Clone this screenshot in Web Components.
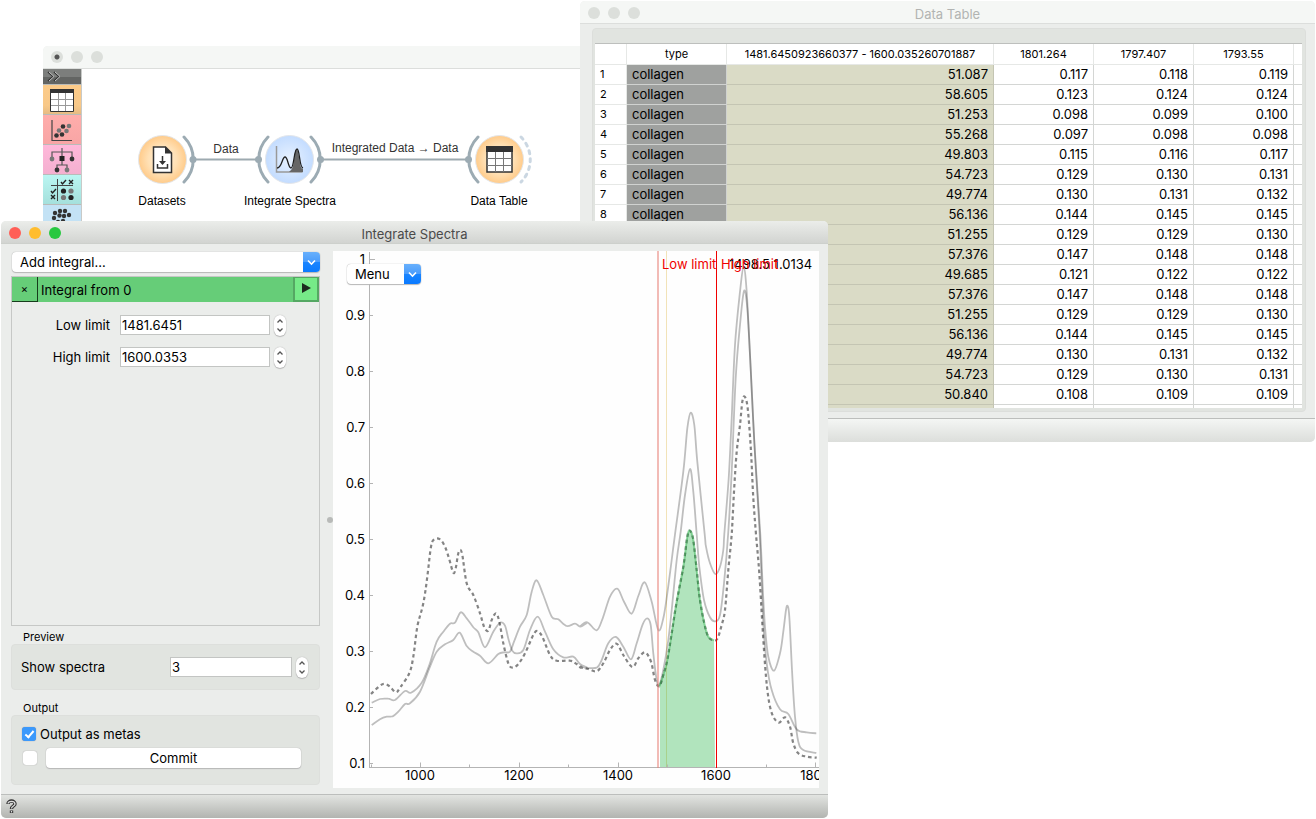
<!DOCTYPE html>
<html lang="en">
<head>
<meta charset="utf-8">
<title>Integrate Spectra</title>
<style>
  body {
    margin: 0;
    background: #fff;
    color: #000;
    font: 13px/16px Inter, "Liberation Sans", sans-serif;
  }
</style>
</head>
<body>
<spectra-desktop></spectra-desktop>

<script>
class MacWindow extends HTMLElement {
  constructor() {
    super();
    this.attachShadow({ mode: 'open' });
  }

  connectedCallback() {
    this.shadowRoot.innerHTML = `
      <style>
        :host {
          display: flex;
          flex-direction: column;
          background: #ebedeb;
          border-radius: 5px;
          overflow: hidden;
        }
        header {
          display: grid;
          grid-template-columns: 72px 1fr 72px;
          align-items: center;
          height: 22px;
          background: #f5f7f5;
          border-bottom: 1px solid #dcdedc;
          color: #b2b4b2;
        }
        .lights {
          display: flex;
          gap: 8px;
          padding-left: 8px;
        }
        .lights i {
          width: 12px;
          height: 12px;
          border-radius: 50%;
          background: #dcdfdb;
        }
        :host([edited]) .lights i:first-child {
          background: radial-gradient(circle, #555 2px, #dcdfdb 3px);
        }
        h1 {
          margin: 0;
          font-size: 13px;
          line-height: 22px;
          padding-top: 2px;
          font-weight: 400;
          text-align: center;
        }
        :host([active]) header {
          background: linear-gradient(#ebedea, #d2d4d1);
          border-color: #cdd0cc;
          color: #4a4a4a;
        }
        :host([active]) i:nth-child(1) { background: #ff5f57; }
        :host([active]) i:nth-child(2) { background: #ffbd2e; }
        :host([active]) i:nth-child(3) { background: #28c840; }
      </style>
      <header>
        <div class="lights"><i></i><i></i><i></i></div>
        <h1>${this.getAttribute('heading') || ''}</h1>
      </header>
      <slot></slot>
    `;
  }
}

class MacSelect extends HTMLElement {
  constructor() {
    super();
    this.attachShadow({ mode: 'open' });
  }

  connectedCallback() {
    const label = this.getAttribute('label');
    this.shadowRoot.innerHTML = `
      <style>
        :host { display: block; }
        div {
          display: grid;
          grid-template-columns: 1fr 17px;
          height: 20px;
          border-radius: 4px;
          background: #fff;
          box-shadow: 0 0 1px #999, 0 1px 1px #bbb;
          overflow: hidden;
        }
        select {
          grid-area: 1 / 1 / 2 / 3;
          appearance: none;
          border: 0;
          padding: 0 20px 0 8px;
          background: none;
          color: inherit;
          font: inherit;
        }
        svg {
          grid-area: 1 / 2;
          pointer-events: none;
          background: linear-gradient(#68b0fc, #4a9cfc 50%, #1a85ff 50%, #0a7aff);
        }
      </style>
      <div>
        <select aria-label="${label}"><option>${label}</option></select>
        <svg width="17" height="20" viewBox="0 0 17 20" fill="none" stroke="#fff" stroke-width="1.6"><path d="M5 8.5l3.5 3.5L12 8.5"/></svg>
      </div>
    `;
  }
}

class SpinBox extends HTMLElement {
  constructor() {
    super();
    this.attachShadow({ mode: 'open' });
  }

  connectedCallback() {
    this.shadowRoot.innerHTML = `
      <style>
        :host { display: block; }
        label {
          display: grid;
          grid-template-columns: var(--label-width, 98px) 1fr 12px;
          align-items: center;
          height: 22px;
        }
        span { text-align: var(--label-align, right); }
        input {
          box-sizing: border-box;
          min-width: 0;
          height: 20px;
          margin: 0 4px 0 10px;
          padding: 0 1px;
          border: 1px solid #c3c5c3;
          background: #fff;
          color: inherit;
          font: inherit;
        }
        svg {
          border-radius: 6px;
          background: #fff;
          box-shadow: 0 0 1px #999, 0 1px 1px #bbb;
        }
      </style>
      <label>
        <span>${this.getAttribute('label')}</span>
        <input type="text" value="${this.getAttribute('value')}">
        <svg width="12" height="21" viewBox="0 0 12 21" fill="none" stroke="#555" stroke-width="1.3"><path d="M3.5 7.5L6 5l2.500 2.500M3.500 13.500L6 16l2.500-2.500"/></svg>
      </label>
    `;
  }
}

class GroupBox extends HTMLElement {
  constructor() {
    super();
    this.attachShadow({ mode: 'open' });
  }

  connectedCallback() {
    this.shadowRoot.innerHTML = `
      <style>
        :host { display: block; }
        h2 {
          margin: 0;
          padding: 0 12px;
          font-size: 11px;
          line-height: 14px;
          font-weight: 400;
        }
        div {
          padding: 11px;
          border: 1px solid #dddfdc;
          border-radius: 4px;
          background: #e1e4e0;
        }
      </style>
      <h2>${this.getAttribute('heading')}</h2>
      <div><slot></slot></div>
    `;
  }
}

class IntegralPanel extends HTMLElement {
  constructor() {
    super();
    this.attachShadow({ mode: 'open' });
  }

  connectedCallback() {
    this.shadowRoot.innerHTML = `
      <style>
        :host {
          display: flex;
          flex-direction: column;
        }
        mac-select { margin-left: 1px; }
        .list {
          flex: 1;
          margin-top: 4px;
          border: 1px solid #c6c8c6;
        }
        .entry {
          display: grid;
          grid-template-columns: 26px 1fr 26px;
          align-items: center;
          height: 25px;
          margin-bottom: 12px;
          background: #66cd78;
        }
        .entry button {
          height: 25px;
          padding: 0;
          border: 1px solid #173c1c;
          border-width: 0 1px 1px 0;
          background: none;
          font: 11px/12px Inter, sans-serif;
        }
        .entry .run {
          border: 2px solid #55a863;
          border-width: 1px 2px 2px;
          background: #76ea88;
        }
        .entry span { padding-left: 3px; }
        .list spin-box { margin: 0 33px 10px 0; }
        group-box { margin-top: 4px; }
        group-box:last-child { margin-top: 11px; }
        .preview { --label-width: 139px; --label-align: left; }
        .preview spin-box { margin: 0 0 0 -2px; }
        .check {
          display: flex;
          align-items: center;
          gap: 4px;
          margin: -1px 0 0 -1px;
        }
        .row {
          display: flex;
          align-items: center;
          gap: 9px;
          margin: 6px 7px 5px 0;
        }
        input {
          display: grid;
          place-content: center;
          flex: none;
          appearance: none;
          width: 14px;
          height: 14px;
          margin: 0;
          border-radius: 3px;
          background: #fff;
          box-shadow: 0 0 1px #888;
        }
        input:checked { background: #3b99fc; }
        input:checked::before {
          content: "";
          width: 3px;
          height: 7px;
          margin-bottom: 2px;
          border: solid #fff;
          border-width: 0 2px 2px 0;
          transform: rotate(40deg);
        }
        .commit {
          flex: 1;
          height: 20px;
          padding: 0;
          border: 0;
          border-radius: 4px;
          background: #fff;
          box-shadow: 0 0 1px #999, 0 1px 1px #bbb;
          color: inherit;
          font: inherit;
        }
      </style>
      <mac-select label="Add integral..."></mac-select>
      <div class="list">
        <div class="entry">
          <button type="button">×</button>
          <span>Integral from 0</span>
          <button type="button" class="run" aria-label="Run"><svg width="12" height="12" viewBox="0 0 12 12"><path d="M2 1l9 5-9 5z" fill="#1d2b1f"/></svg></button>
        </div>
        <spin-box label="Low limit" value="1481.6451"></spin-box>
        <spin-box label="High limit" value="1600.0353"></spin-box>
      </div>
      <group-box class="preview" heading="Preview">
        <spin-box label="Show spectra" value="3"></spin-box>
      </group-box>
      <group-box heading="Output">
        <label class="check"><input type="checkbox" checked>Output as metas</label>
        <div class="row">
          <input type="checkbox" aria-label="Commit automatically">
          <button type="button" class="commit">Commit</button>
        </div>
      </group-box>
    `;
  }
}

// Samples are in thirds of a pixel; every run starts at its own [dx, dy].
const TRACES = {
  upper: [
    [-9, 807, [125,615, 150,598, 170,590, 188,589, 205,575, 225,552, 240,550, 270,515, 300,440, 320,395, 345,373, 370,360, 389,338, 410,378, 430,395, 450,407, 475,430, 505,402, 523,397, 540,395, 552,365, 570,320, 590,285, 605,215, 620,181, 640,225, 665,290, 685,298, 710,318, 735,311, 752,320, 772,307]],
    [741, 807, [0,320, 22,307, 50,331, 68,295, 90,230, 112,206, 132,245, 155,281, 175,228, 194,187, 215,245, 235,330, 250,295, 262,220, 275,120]],
    [741, -18, [285,868, 310,680, 322,550, 332,503, 343,540, 352,650, 374,868]],
    [741, 807, [378,80, 390,130, 406,162, 420,140, 430,90]],
    [741, -18, [433,868, 446,700, 455,520, 465,300, 480,140, 491,68, 500,140, 510,330, 523,590, 541,868]],
    [741, 807, [548,200, 555,320, 565,410, 582,452, 600,400, 610,335, 618,270, 623,258, 628,290, 636,450, 645,590, 655,665, 670,690, 709,699]],
  ],
  middle: [
    [-9, 807, [125,548, 150,537, 175,536, 195,540, 225,513, 243,518, 275,488, 298,435, 320,365, 340,335, 360,311, 375,308, 392,277, 410,295, 430,322, 445,337, 465,382, 490,335, 510,308, 525,317, 536,360, 547,392, 560,400, 580,390, 600,330, 623,290, 645,335, 670,388, 700,412, 730,410, 750,432, 770,442]],
    [741, 807, [15,443, 50,443, 65,420, 85,370, 108,351, 130,380, 153,418, 170,370, 188,313, 202,295, 212,315, 220,400, 230,480, 238,495, 250,450, 265,360, 275,270, 290,120]],
    [741, -18, [302,860, 315,750, 330,672, 340,740, 350,868]],
    [741, 807, [358,140, 372,240, 390,292, 406,304, 420,285, 432,190]],
    [741, -18, [445,860, 455,680, 467,400, 480,240, 492,138, 502,190, 512,370, 525,630, 539,868]],
    [741, 807, [550,310, 560,430, 575,510, 600,568, 625,582, 650,628, 680,637, 709,640]],
  ],
  dashed: [
    [-9, 807, [123,522, 150,497, 165,492, 180,500, 198,517, 212,500, 238,460, 250,410, 262,320, 280,250, 292,170, 303,80, 313,58, 330,58, 345,80, 357,115, 370,158, 377,145, 386,96, 396,100, 410,190, 430,225, 450,280, 463,322, 475,332, 485,300, 498,280, 508,305, 520,370, 535,430, 548,443, 565,432, 585,400, 610,345, 622,333, 637,350, 660,405, 680,422, 720,422, 740,432, 760,445]],
    [741, 807, [0,442, 25,447, 50,454, 70,430, 90,390, 110,371, 130,405, 157,441, 175,415, 195,397, 213,425, 225,480]],
  ],
  peak: [
    [741, 807, [238,499, 250,465, 262,420, 275,340, 290,245, 310,140, 322,50, 330,32, 340,60, 350,150, 360,240, 373,310, 385,350, 402,361]],
  ],
  tail: [
    [741, 807, [413,355, 425,315, 435,270, 445,150]],
    [741, -18, [455,868, 462,740, 470,620, 480,540, 487,470, 494,455, 503,490, 513,620, 520,760, 528,868]],
    [741, 807, [538,160, 548,330, 558,470, 568,550, 580,590, 597,608, 615,592, 630,620, 640,670, 655,700, 680,710, 710,713]],
  ],
};

function points(runs) {
  const out = [];
  runs.forEach(([dx, dy, run]) => {
    for (let i = 0; i < run.length; i += 2) {
      out.push([(run[i] + dx) / 3, (run[i + 1] + dy) / 3]);
    }
  });
  return out;
}

// Catmull-Rom spline through the points
function curve(pts) {
  let d = `M${pts[0].join(' ')}`;
  for (let i = 0; i < pts.length - 1; i += 1) {
    const a = pts[i - 1] || pts[i];
    const b = pts[i];
    const c = pts[i + 1];
    const e = pts[i + 2] || c;
    const ctrl = [
      b[0] + (c[0] - a[0]) / 6, b[1] + (c[1] - a[1]) / 6,
      c[0] - (e[0] - b[0]) / 6, c[1] - (e[1] - b[1]) / 6,
      c[0], c[1],
    ];
    d += `C${ctrl.map((v) => v.toFixed(1)).join(' ')}`;
  }
  return d;
}

class SpectraPlot extends HTMLElement {
  constructor() {
    super();
    this.attachShadow({ mode: 'open' });
  }

  connectedCallback() {
    let yAxis = '';
    for (let i = 0; i < 10; i += 1) {
      const y = 8 + i * 56;
      const value = (10 - i) / 10;
      yAxis += `<path class="axis" d="M36 ${y + 0.5}h${i ? 4 : 6}"/>
        <text x="32" y="${y + 5}" text-anchor="end">${value}</text>`;
    }
    let xAxis = '';
    for (let i = 0; i < 10; i += 1) {
      const x = Math.round(37.6 + i * 49.4);
      xAxis += `<path class="axis" d="M${x + 0.5} 516.500v${i % 2 ? -5 : -3}"/>`;
      if (i % 2) {
        xAxis += `<text x="${x}" y="529" text-anchor="middle">${900 + i * 100}</text>`;
      }
    }
    const upper = curve(points(TRACES.upper));
    const middle = curve(points(TRACES.middle));
    const dashed = curve(points([...TRACES.dashed, ...TRACES.peak, ...TRACES.tail]));
    const peak = curve(points(TRACES.peak));

    this.shadowRoot.innerHTML = `
      <style>
        :host {
          display: block;
          position: relative;
          background: #fefefe;
        }
        svg {
          display: block;
          width: 100%;
          font-size: 13px;
        }
        .axis { fill: none; stroke: #b4b4b4; }
        .trace { fill: none; stroke: #000; stroke-opacity: .25; stroke-width: 1.8; }
        .dash { stroke-opacity: .48; stroke-width: 2.2; stroke-dasharray: 3.500 3; }
        mac-select {
          position: absolute;
          left: 14px;
          top: 13px;
          width: 74px;
        }
      </style>
      <svg viewBox="0 0 486 537" role="img" aria-label="Spectra">
        <path d="M333.500 0v517" stroke="#f2e3b8"/>
        <path d="${peak}L382 516H327V437z" fill="#00aa28" fill-opacity=".3"/>
        <path d="${upper}" class="trace"/>
        <path d="${middle}" class="trace"/>
        <path d="${dashed}" class="trace dash"/>
        <path d="${peak}" fill="none" stroke="#32b450" stroke-opacity=".5" stroke-width="2"/>
        <path class="axis" d="M36.500 1v516M36 516.500h450"/>
        ${yAxis}
        ${xAxis}
        <path d="M325 0v517" stroke="#e8837a" stroke-opacity=".55" stroke-width="2"/>
        <path d="M383.500 0v517" stroke="#f00000"/>
        <text x="396" y="18">1498.5 1.0134</text>
        <text x="329" y="18" fill="#f00000">Low limit</text>
        <text x="388" y="18" fill="#f00000">High limit</text>
      </svg>
      <mac-select label="Menu"></mac-select>
    `;
  }
}

const ROWS = [
  ['51.087', '0.117', '0.118', '0.119'],
  ['58.605', '0.123', '0.124', '0.124'],
  ['51.253', '0.098', '0.099', '0.100'],
  ['55.268', '0.097', '0.098', '0.098'],
  ['49.803', '0.115', '0.116', '0.117'],
  ['54.723', '0.129', '0.130', '0.131'],
  ['49.774', '0.130', '0.131', '0.132'],
  ['56.136', '0.144', '0.145', '0.145'],
  ['51.255', '0.129', '0.129', '0.130'],
  ['57.376', '0.147', '0.148', '0.148'],
  ['49.685', '0.121', '0.122', '0.122'],
  ['57.376', '0.147', '0.148', '0.148'],
  ['51.255', '0.129', '0.129', '0.130'],
  ['56.136', '0.144', '0.145', '0.145'],
  ['49.774', '0.130', '0.131', '0.132'],
  ['54.723', '0.129', '0.130', '0.131'],
  ['50.840', '0.108', '0.109', '0.109'],
  ['', '', '', ''],
];

class DataTable extends HTMLElement {
  constructor() {
    super();
    this.attachShadow({ mode: 'open' });
  }

  connectedCallback() {
    // the rows from the ninth on have their left half under the front window
    const body = ROWS.map((row, i) => `
      <tr>
        <th scope="row">${i < 8 ? i + 1 : ''}</th>
        <td class="type">${i < 8 ? 'collagen' : ''}</td>
        ${row.map((cell) => `<td>${cell}</td>`).join('')}
        <td></td>
      </tr>`).join('');

    this.shadowRoot.innerHTML = `
      <style>
        :host {
          display: block;
          margin: 4px 9px 6px 12px;
          padding: 14px 3px 3px 2px;
          border: 1px solid #dcdedb;
          border-radius: 4px;
          background: #e1e4e0;
        }
        .view {
          height: 364px;
          border-top: 1px solid #bdbfbd;
          background: #fff;
          overflow: hidden;
        }
        table {
          width: 100%;
          table-layout: fixed;
          border-collapse: separate;
          border-spacing: 0;
        }
        th, td {
          box-sizing: border-box;
          height: 20px;
          padding: 0 5px;
          border: solid #d4d6d4;
          border-width: 0 1px 1px 0;
          line-height: 19px;
          text-align: right;
          white-space: nowrap;
        }
        th { font-size: 11px; font-weight: 400; border-color: #e6e8e6; }
        thead th { height: 21px; text-align: center; }
        tbody th { text-align: left; }
        td.type { background: #9fa19f; border-color: #d0d2d0; text-align: left; }
        td:nth-child(3) { background: #dadbc6; border-color: #c4c5b3; }
        th:last-child, td:last-child { border-right: 0; }
      </style>
      <div class="view">
        <table>
          <colgroup>
            <col style="width: 32px"><col style="width: 100px"><col style="width: 267px">
            <col style="width: 100px"><col style="width: 100px"><col style="width: 100px"><col>
          </colgroup>
          <thead>
            <tr><th></th><th>type</th><th>1481.6450923660377 - 1600.035260701887</th><th>1801.264</th><th>1797.407</th><th>1793.55</th><th></th></tr>
          </thead>
          <tbody>${body}</tbody>
        </table>
      </div>
    `;
  }
}

class WidgetToolbar extends HTMLElement {
  constructor() {
    super();
    this.attachShadow({ mode: 'open' });
  }

  connectedCallback() {
    this.shadowRoot.innerHTML = `
      <style>
        :host {
          display: flex;
          flex-direction: column;
          box-sizing: border-box;
          width: 39px;
          border-right: 1px solid #c8cac8;
        }
        button {
          flex: none;
          height: 30px;
          padding: 0;
          border: 0;
          border-bottom: 1px solid #b9bbb9;
        }
        .more {
          height: 16px;
          background: linear-gradient(#7c7e7c 50%, #636563 50%);
          text-align: left;
        }
        svg { display: block; margin: 0 auto; }
        .more svg { margin: 0 0 0 4px; }
        .data { background: linear-gradient(#fccb89, #f8c888 70%, #e6bb83); }
        .visualize { background: linear-gradient(#ffadab, #f8a5a5); }
        .model { background: linear-gradient(#ffb8da, #f4b0d0); }
        .evaluate { background: linear-gradient(#baf6f2, #a5e0dc); }
        .cluster { background: #c3e2f5; }
      </style>
      <button type="button" class="more" aria-label="Expand"><svg width="14" height="11" viewBox="0 0 14 11" fill="none" stroke="#d8d8d8" stroke-width="1.500"><path d="M1 1l5 4.500L1 10M7 1l5 4.500L7 10" stroke="#333"/><path d="M2 1l5 4.500L2 10M8 1l5 4.500L8 10" stroke="#c4c4c4" stroke-width="1"/></svg></button>
      <button type="button" class="data" aria-label="Data"><svg width="24" height="24" viewBox="0 0 24 24"><path fill="#fff" stroke="#333" d="M.5 1.500h23v22H.5z"/><path fill="#333" d="M0 1h24v4H0z"/><path fill="none" stroke="#999" d="M8.500 5v18M15.500 5v18M1 11.500h22M1 17.500h22"/></svg></button>
      <button type="button" class="visualize" aria-label="Visualize"><svg width="24" height="24" viewBox="0 0 24 24"><path fill="none" stroke="#444" stroke-width="1.200" d="M2 2v20.500h20"/><g fill="#333"><circle cx="13" cy="8.500" r="2.300"/><circle cx="6.500" cy="17.500" r="2.300"/><circle cx="12" cy="16.500" r="2.300"/></g><g fill="#777"><circle cx="19" cy="8" r="2.300"/><circle cx="9" cy="12.500" r="2.300"/><circle cx="16.500" cy="13" r="2.300"/></g></svg></button>
      <button type="button" class="model" aria-label="Model"><svg width="26" height="26" viewBox="0 0 26 26"><path fill="none" stroke="#555" stroke-width="1.200" d="M13 1v17M3 12V5h20v7M8 23v-5h10v5"/><path fill="#222" d="M10.500 9h5v5h-5z"/><circle cx="3" cy="12" r="2.400" fill="#777"/><circle cx="23" cy="12" r="2.400" fill="#333"/><circle cx="8" cy="23" r="2.400" fill="#333"/><circle cx="18" cy="23" r="2.400" fill="#777"/></svg></button>
      <button type="button" class="evaluate" aria-label="Evaluate"><svg width="26" height="26" viewBox="0 0 26 26"><path fill="none" stroke="#444" d="M2 8.500h22M8.500 2v22"/><path fill="none" stroke="#222" stroke-width="1.400" d="M12 5l1.500 2L17 3M20 3l4 4M24 3l-4 4M2 14l1.500 2L7 12M2 18l4 4M6 18l-4 4"/><circle cx="14.500" cy="14" r="2.600" fill="#222"/><circle cx="22" cy="14" r="2.600" fill="#777"/><circle cx="14.500" cy="20.500" r="2.600" fill="#777"/><circle cx="22" cy="20.500" r="2.600" fill="#222"/></svg></button>
      <button type="button" class="cluster" aria-label="Unsupervised"><svg width="24" height="24" viewBox="0 0 24 24"><g fill="#333"><circle cx="5" cy="5" r="2.200"/><circle cx="10" cy="3" r="2.200"/><circle cx="15" cy="3" r="2.200"/><circle cx="19" cy="7" r="2.200"/><circle cx="4" cy="10" r="2.200"/><circle cx="9.500" cy="7.500" r="2.200"/><circle cx="14" cy="8" r="2.200"/><circle cx="8" cy="14" r="2.200"/><circle cx="13" cy="13" r="2.200"/></g></svg></button>
    `;
  }
}

class WorkflowCanvas extends HTMLElement {
  constructor() {
    super();
    this.attachShadow({ mode: 'open' });
  }

  connectedCallback() {
    this.shadowRoot.innerHTML = `
      <style>
        :host {
          display: block;
          flex: 1;
          background: #fff;
          overflow: hidden;
        }
        svg { display: block; }
        text {
          font: 12px "Liberation Sans", Arial, sans-serif;
          text-anchor: middle;
        }
        .link { fill: none; stroke: #9daab0; stroke-width: 2; }
        .anchor { fill: none; stroke: #9cabb3; stroke-width: 3; stroke-linecap: round; }
      </style>
      <svg width="498" height="160" viewBox="82 69 498 160" role="img" aria-label="Workflow">
        <defs>
          <radialGradient id="orange"><stop offset="0" stop-color="#fff0dc"/><stop offset=".6" stop-color="#ffe0b4"/><stop offset="1" stop-color="#ffcb8a"/></radialGradient>
          <radialGradient id="blue"><stop offset="0" stop-color="#e8f2ff"/><stop offset="1" stop-color="#c3dcff"/></radialGradient>
        </defs>
        <path class="link" d="M193 159.500h65M321 159.500h147"/>
        <g fill="#9cabb3">
          <circle cx="193" cy="159.500" r="3.500"/><circle cx="258.500" cy="159.500" r="3.500"/>
          <circle cx="320.500" cy="159.500" r="3.500"/><circle cx="468.500" cy="159.500" r="3.500"/>
        </g>
        <path class="anchor" d="M184 137a32 32 0 0 1 0 45M268 137a32 32 0 0 0 0 45M311 137a32 32 0 0 1 0 45M478 137a32 32 0 0 0 0 45"/>
        <path class="anchor" d="M521 137a32 32 0 0 1 0 45" style="stroke:#cbd7e2;stroke-dasharray:3 5"/>
        <g stroke="#e3e6ea">
          <circle cx="162.500" cy="159.500" r="24" fill="url(#orange)"/>
          <circle cx="289.500" cy="159.500" r="24" fill="url(#blue)"/>
          <circle cx="499.500" cy="159.500" r="24" fill="url(#orange)"/>
        </g>
        <path fill="#fff" stroke="#333" stroke-width="1.500" d="M153.500 147h12l6 6v19.500h-18z"/>
        <path fill="#333" d="M165 146.500l7 7h-7z"/>
        <path fill="none" stroke="#333" stroke-width="1.500" d="M162.500 156v8M157.500 164v4h10v-4"/>
        <path fill="#333" d="M159 161h7l-3.500 4z"/>
        <path fill="none" stroke="#999" stroke-width="1.500" d="M276.500 146v26h26"/>
        <path fill="#666" d="M289 172c4-3 4-6 5-12 1-7 1-11 2.500-11s2 5 3 11c1 7 2 9 3.500 9v3z"/>
        <path fill="none" stroke="#222" stroke-width="1.300" d="M277 168c5 0 5-11 8-11s3 11 6 11 3-19 6-19 2 18 6 19"/>
        <path fill="#fff" stroke="#333" stroke-width="1.500" d="M487 147h25v25h-25z"/>
        <path fill="#333" d="M486 146h27v6h-27z"/>
        <path fill="none" stroke="#777" d="M495.500 152v20M503.500 152v20M487 158.500h25M487 165.500h25"/>
        <text x="226" y="153" fill="#333">Data</text>
        <text x="395" y="152" fill="#333">Integrated Data → Data</text>
        <text x="162" y="205">Datasets</text>
        <text x="290" y="205">Integrate Spectra</text>
        <text x="499" y="205">Data Table</text>
      </svg>
    `;
  }
}

class SpectraDesktop extends HTMLElement {
  constructor() {
    super();
    this.attachShadow({ mode: 'open' });
  }

  connectedCallback() {
    this.shadowRoot.innerHTML = `
      <style>
        :host { display: block; }
        mac-window { position: absolute; }
        .workflow { left: 43px; right: 720px; top: 46px; }
        .table { left: 580px; right: 1px; top: 1px; }
        .integrate { left: 1px; right: 488px; top: 221px; }
        .canvas { display: flex; height: 160px; }
        .body {
          display: grid;
          grid-template-columns: 309px 13px 1fr;
          padding: 7px 9px 6px 10px;
        }
        integral-panel { margin: 1px 0 3px; }
        .grip {
          align-self: center;
          justify-self: end;
          width: 6px;
          height: 6px;
          border-radius: 50%;
          background: #b8bab8;
        }
        footer {
          height: 23px;
          border-top: 1px solid #bcbebc;
          background: linear-gradient(#f4f6f4, #dcdedb);
        }
        .integrate footer { background: linear-gradient(#e2e4e1, #b2b4b0); }
        footer button {
          display: block;
          padding: 4px 5px;
          border: 0;
          background: none;
        }
        footer svg { display: block; }
      </style>
      <mac-window class="workflow" edited>
        <div class="canvas">
          <widget-toolbar></widget-toolbar>
          <workflow-canvas></workflow-canvas>
        </div>
      </mac-window>
      <mac-window class="table" heading="Data Table">
        <data-table></data-table>
        <footer></footer>
      </mac-window>
      <mac-window class="integrate" heading="Integrate Spectra" active>
        <div class="body">
          <integral-panel></integral-panel>
          <div class="grip"></div>
          <spectra-plot></spectra-plot>
        </div>
        <footer>
          <button type="button" aria-label="Help"><svg width="11" height="15" viewBox="0 0 11 15" fill="none"><path d="M2 5c0-4 7-4 7 0 0 2-3.500 2-3.500 5M5.500 11.500v2.500" stroke="#333" stroke-width="3.400"/><path d="M2 4.500c.5-3 7-3 7 .5 0 2-3.500 2-3.500 4.500M5.500 12v1.500" stroke="#dcdcdc" stroke-width="1.300"/></svg></button>
        </footer>
      </mac-window>
    `;
  }
}

customElements.define('mac-window', MacWindow);
customElements.define('mac-select', MacSelect);
customElements.define('spin-box', SpinBox);
customElements.define('group-box', GroupBox);
customElements.define('integral-panel', IntegralPanel);
customElements.define('spectra-plot', SpectraPlot);
customElements.define('data-table', DataTable);
customElements.define('widget-toolbar', WidgetToolbar);
customElements.define('workflow-canvas', WorkflowCanvas);
customElements.define('spectra-desktop', SpectraDesktop);
</script>
</body>
</html>
